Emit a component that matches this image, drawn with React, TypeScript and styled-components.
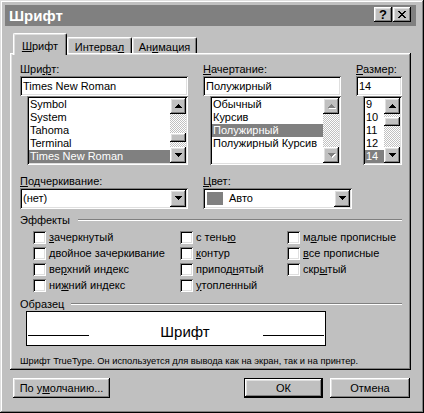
import React from "react";
import styled, { createGlobalStyle, css } from "styled-components";

const Global = createGlobalStyle`
  html, body { margin: 0; padding: 0; background: #fff; }
  body { font-family: "Liberation Sans", Arial, sans-serif; font-size: 11px; color: #000; }
  * { box-sizing: border-box; }
  u { text-decoration: underline; text-underline-offset: 1px; }
`;

const raised = css`
  box-shadow: inset -1px -1px #000, inset 1px 1px #fff, inset -2px -2px #808080, inset 2px 2px #dfdfdf;
`;
const sunken = css`
  box-shadow: inset 1px 1px #808080, inset -1px -1px #fff, inset 2px 2px #000, inset -2px -2px #dfdfdf;
`;

const Window = styled.div`
  width: 424px;
  height: 413px;
  background: #c0c0c0;
  box-shadow: inset -1px -1px #000, inset 1px 1px #dfdfdf, inset -2px -2px #808080, inset 2px 2px #fff;
  padding: 5px 8px 0 5px;
  display: flex;
  flex-direction: column;
`;

const TitleBar = styled.div`
  height: 21px;
  background: #808080;
  display: flex;
  align-items: flex-start;
  padding: 0 5px 0 4px;
`;

const TitleText = styled.div`
  flex: 1;
  color: #fff;
  font-weight: bold;
  font-size: 15px;
  line-height: 21px;
`;

const CaptionButton = styled.div<{ $gap?: number }>`
  width: 18px;
  height: 15px;
  margin-top: 2px;
  margin-left: ${(p) => p.$gap ?? 0}px;
  background: #c0c0c0;
  ${raised};
  display: flex;
  align-items: center;
  justify-content: center;
  font-weight: bold;
  font-size: 13px;
  line-height: 13px;
  padding-bottom: 1px;
`;

const Body = styled.div`
  padding: 7px 5px 0 5px;
  display: flex;
  flex-direction: column;
`;

const TabRow = styled.div`
  height: 20px;
  display: flex;
  align-items: flex-end;
  padding-left: 3px;
  position: relative;
  z-index: 1;
`;

const Tab = styled.div<{ $active?: boolean; $w: number }>`
  width: ${(p) => p.$w}px;
  height: ${(p) => (p.$active ? 22 : 16)}px;
  margin-bottom: ${(p) => (p.$active ? -2 : 0)}px;
  background: #c0c0c0;
  border-left: 1px solid #fff;
  border-top: 1px solid #fff;
  border-right: 1px solid #000;
  border-radius: 2px 2px 0 0;
  box-shadow: inset -1px 0 #808080, inset 1px 1px #dfdfdf;
  text-align: center;
  line-height: 14px;
  padding-top: ${(p) => (p.$active ? 5 : 2)}px;
`;

const Panel = styled.div`
  height: 317px;
  background: #c0c0c0;
  box-shadow: inset -1px -1px #000, inset 1px 1px #fff, inset -2px -2px #808080, inset 2px 2px #dfdfdf;
  padding: 9px 9px 2px 10px;
  display: flex;
  flex-direction: column;
`;

const Columns = styled.div<{ $mt?: number }>`
  display: flex;
  gap: 15px;
  margin-top: ${(p) => p.$mt ?? 0}px;
`;

const Column = styled.div<{ $w: number }>`
  width: ${(p) => p.$w}px;
  display: flex;
  flex-direction: column;
`;

const FieldLabel = styled.div`
  height: 14px;
  line-height: 14px;
  white-space: nowrap;
`;

const TextInput = styled.div`
  height: 20px;
  background: #fff;
  ${sunken};
  padding: 2px 3px;
  line-height: 16px;
  white-space: nowrap;
  overflow: hidden;
`;

const ListBox = styled.div`
  height: 69px;
  margin-left: 7px;
  background: #fff;
  ${sunken};
  padding: 2px;
  display: flex;
`;

const ListItems = styled.div`
  flex: 1;
  display: flex;
  flex-direction: column;
  overflow: hidden;
`;

const ListRow = styled.div<{ $selected?: boolean }>`
  height: 13px;
  line-height: 13px;
  padding-left: 1px;
  white-space: nowrap;
  background: ${(p) => (p.$selected ? "#808080" : "transparent")};
  color: ${(p) => (p.$selected ? "#fff" : "#000")};
`;

const ScrollBar = styled.div`
  width: 16px;
  display: flex;
  flex-direction: column;
`;

const ScrollButton = styled.div`
  width: 16px;
  height: 16px;
  background: #c0c0c0;
  ${raised};
  display: flex;
  align-items: center;
  justify-content: center;
  padding-left: 1px;
`;

const ScrollTrack = styled.div`
  flex: 1;
  background: repeating-conic-gradient(#fff 0 25%, #c0c0c0 0 50%) 0 0 / 2px 2px;
  display: flex;
  flex-direction: column;
`;

const Thumb = styled.div<{ $top: number }>`
  margin-top: ${(p) => p.$top}px;
  height: 9px;
  background: #c0c0c0;
  ${raised};
`;

const Combo = styled.div`
  height: 21px;
  background: #fff;
  ${sunken};
  padding: 2px;
  display: flex;
  align-items: stretch;
`;

const ComboValue = styled.div`
  flex: 1;
  display: flex;
  align-items: center;
  padding-left: 1px;
  line-height: 17px;
  white-space: nowrap;
`;

const Swatch = styled.div`
  width: 16px;
  height: 13px;
  margin: 0 6px 0 1px;
  background: #808080;
`;

const ComboButton = styled.div`
  width: 16px;
  background: #c0c0c0;
  ${raised};
  display: flex;
  align-items: center;
  justify-content: center;
  padding-left: 1px;
`;

const GroupHeader = styled.div<{ $mt: number }>`
  margin-top: ${(p) => p.$mt}px;
  height: 14px;
  display: flex;
  align-items: center;
`;

const GroupLine = styled.div<{ $ml: number }>`
  flex: 1;
  margin-left: ${(p) => p.$ml}px;
  border-top: 1px solid #808080;
  border-bottom: 1px solid #fff;
`;

const EffectsGrid = styled.div`
  margin-top: 2px;
  padding-left: 13px;
  display: grid;
  grid-template-columns: 147px 107px 1fr;
  grid-template-rows: repeat(4, 16px);
`;

const CheckRow = styled.div<{ $col: number; $row: number }>`
  grid-column: ${(p) => p.$col};
  grid-row: ${(p) => p.$row};
  display: flex;
  align-items: center;
  gap: 3px;
  white-space: nowrap;
`;

const CheckBox = styled.div`
  width: 13px;
  height: 13px;
  background: #fff;
  ${sunken};
`;

const SampleBox = styled.div`
  margin-left: 6px;
  width: 300px;
  height: 35px;
  background: #fff;
  border: 1px solid #000;
  display: grid;
  grid-template-columns: 61px 1fr 61px;
  padding: 0 1px;
`;

const SampleLine = styled.div`
  align-self: end;
  height: 1px;
  background: #000;
  margin-bottom: 9px;
`;

const SampleText = styled.div`
  align-self: end;
  text-align: center;
  font-size: 15px;
  line-height: 15px;
  margin-bottom: 6px;
  padding-left: 18px;
`;

const Note = styled.div`
  margin-top: 8px;
  height: 14px;
  line-height: 14px;
  font-size: 9.3px;
  white-space: nowrap;
`;

const ButtonRow = styled.div`
  margin-top: 8px;
  display: flex;
  padding: 0 1px 0 3px;
`;

const Button = styled.div<{ $w: number; $default?: boolean; $push?: boolean; $ml?: number }>`
  width: ${(p) => p.$w}px;
  height: 20px;
  margin-left: ${(p) => (p.$push ? "auto" : `${p.$ml ?? 0}px`)};
  background: #c0c0c0;
  border: ${(p) => (p.$default ? "1px solid #000" : "none")};
  ${raised};
  display: flex;
  align-items: center;
  justify-content: center;
  line-height: 14px;
  white-space: nowrap;
`;

const Arrow = ({ dir, disabled }: { dir: "up" | "down"; disabled?: boolean }) => {
  const up = "M3 0h1v1H3zM2 1h3v1H2zM1 2h5v1H1zM0 3h7v1H0z";
  const down = "M0 0h7v1H0zM1 1h5v1H1zM2 2h3v1H2zM3 3h1v1H3z";
  const d = dir === "up" ? up : down;
  return (
    <svg width="8" height="5" viewBox="0 0 8 5" shapeRendering="crispEdges">
      {disabled && <path d={d} fill="#fff" transform="translate(1,1)" />}
      <path d={d} fill={disabled ? "#808080" : "#000"} />
    </svg>
  );
};

const CloseGlyph = () => (
  <svg width="8" height="7" viewBox="0 0 8 7" shapeRendering="crispEdges">
    <path
      d="M0 0h2v1H0zM6 0h2v1H6zM1 1h2v1H1zM5 1h2v1H5zM2 2h4v1H2zM3 3h2v1H3zM2 4h4v1H2zM1 5h2v1H1zM5 5h2v1H5zM0 6h2v1H0zM6 6h2v1H6z"
      fill="#000"
    />
  </svg>
);

const Mn = ({ text, at }: { text: string; at: number }) =>
  at < 0 ? (
    <>{text}</>
  ) : (
    <>
      {text.slice(0, at)}
      <u>{text[at]}</u>
      {text.slice(at + 1)}
    </>
  );

type ListProps = {
  items: string[];
  selected: number;
  thumbTop?: number;
  disabled?: boolean;
};

const List = ({ items, selected, thumbTop, disabled }: ListProps) => (
  <ListBox>
    <ListItems>
      {items.map((t, i) => (
        <ListRow key={t} $selected={i === selected}>
          {t}
        </ListRow>
      ))}
    </ListItems>
    <ScrollBar>
      <ScrollButton>
        <Arrow dir="up" disabled={disabled} />
      </ScrollButton>
      <ScrollTrack>{thumbTop !== undefined && <Thumb $top={thumbTop} />}</ScrollTrack>
      <ScrollButton>
        <Arrow dir="down" disabled={disabled} />
      </ScrollButton>
    </ScrollBar>
  </ListBox>
);

const effects: [string, number][][] = [
  [
    ["зачеркнутый", 0],
    ["двойное зачеркивание", 0],
    ["верхний индекс", 2],
    ["нижний индекс", 2],
  ],
  [
    ["с тенью", 6],
    ["контур", 0],
    ["приподнятый", 6],
    ["утопленный", 0],
  ],
  [
    ["малые прописные", 1],
    ["все прописные", 0],
    ["скрытый", 3],
  ],
];

export default function App() {
  return (
    <>
      <Global />
      <Window>
        <TitleBar>
          <TitleText>Шрифт</TitleText>
          <CaptionButton>?</CaptionButton>
          <CaptionButton $gap={1}>
            <CloseGlyph />
          </CaptionButton>
        </TitleBar>
        <Body>
          <TabRow>
            <Tab $active $w={54}>
              <Mn text="Шрифт" at={0} />
            </Tab>
            <Tab $w={65}>
              <Mn text="Интервал" at={7} />
            </Tab>
            <Tab $w={65}>
              <Mn text="Анимация" at={2} />
            </Tab>
          </TabRow>
          <Panel>
            <Columns>
              <Column $w={168}>
                <FieldLabel>
                  <Mn text="Шрифт:" at={3} />
                </FieldLabel>
                <TextInput>Times New Roman</TextInput>
                <List
                  items={["Symbol", "System", "Tahoma", "Terminal", "Times New Roman"]}
                  selected={4}
                  thumbTop={19}
                />
              </Column>
              <Column $w={138}>
                <FieldLabel>
                  <Mn text="Начертание:" at={0} />
                </FieldLabel>
                <TextInput>Полужирный</TextInput>
                <List
                  items={["Обычный", "Курсив", "Полужирный", "Полужирный Курсив"]}
                  selected={2}
                  disabled
                />
              </Column>
              <Column $w={46}>
                <FieldLabel>
                  <Mn text="Размер:" at={0} />
                </FieldLabel>
                <TextInput>14</TextInput>
                <List items={["9", "10", "11", "12", "14"]} selected={4} thumbTop={3} />
              </Column>
            </Columns>
            <Columns $mt={9}>
              <Column $w={168}>
                <FieldLabel>
                  <Mn text="Подчеркивание:" at={0} />
                </FieldLabel>
                <Combo>
                  <ComboValue>(нет)</ComboValue>
                  <ComboButton>
                    <Arrow dir="down" />
                  </ComboButton>
                </Combo>
              </Column>
              <Column $w={149}>
                <FieldLabel>
                  <Mn text="Цвет:" at={0} />
                </FieldLabel>
                <Combo>
                  <ComboValue>
                    <Swatch />
                    Авто
                  </ComboValue>
                  <ComboButton>
                    <Arrow dir="down" />
                  </ComboButton>
                </Combo>
              </Column>
            </Columns>
            <GroupHeader $mt={4}>
              Эффекты
              <GroupLine $ml={8} />
            </GroupHeader>
            <EffectsGrid>
              {effects.map((col, ci) =>
                col.map(([t, at], ri) => (
                  <CheckRow key={t} $col={ci + 1} $row={ri + 1}>
                    <CheckBox />
                    <span>
                      <Mn text={t} at={at} />
                    </span>
                  </CheckRow>
                ))
              )}
            </EffectsGrid>
            <GroupHeader $mt={4}>
              Образец
              <GroupLine $ml={7} />
            </GroupHeader>
            <SampleBox>
              <SampleLine />
              <SampleText>Шрифт</SampleText>
              <SampleLine />
            </SampleBox>
            <Note>
              Шрифт TrueType. Он используется для вывода как на экран, так и на принтер.
            </Note>
          </Panel>
          <ButtonRow>
            <Button $w={97}>
              <Mn text="По умолчанию..." at={4} />
            </Button>
            <Button $w={79} $default $push>
              ОК
            </Button>
            <Button $w={80} $ml={7}>
              Отмена
            </Button>
          </ButtonRow>
        </Body>
      </Window>
    </>
  );
}
